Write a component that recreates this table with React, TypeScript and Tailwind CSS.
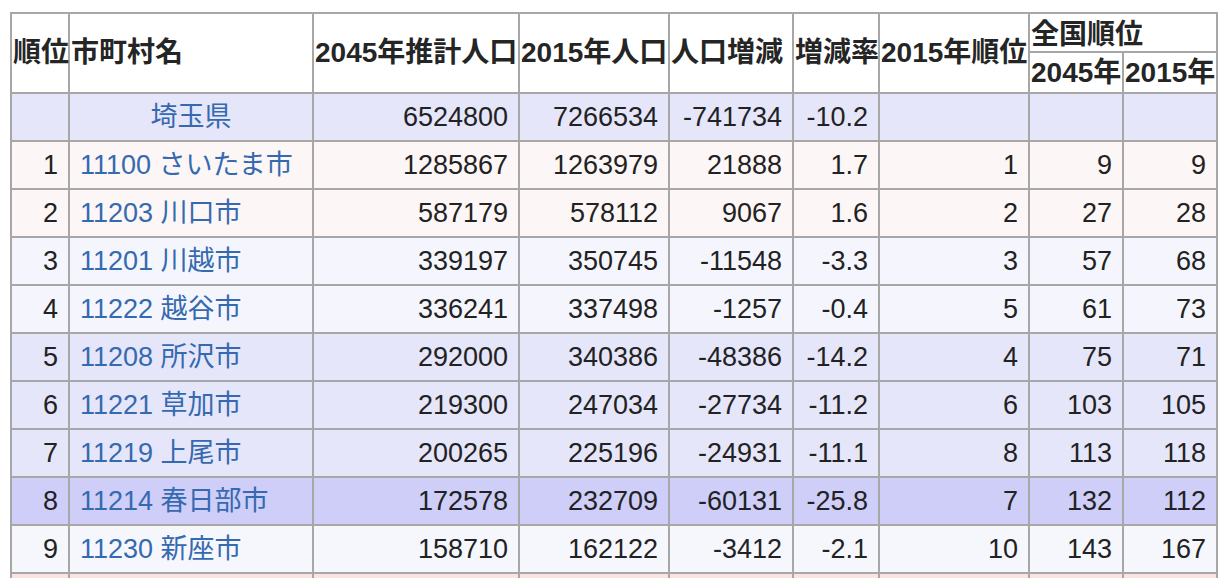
import React from "react";

type Row = {
  rank: string;
  name: string;
  p2045: string;
  p2015: string;
  diff: string;
  rate: string;
  r2015: string;
  n2045: string;
  n2015: string;
  bg: string;
};

const rows: Row[] = [
  { rank: "1", name: "11100 さいたま市", p2045: "1285867", p2015: "1263979", diff: "21888", rate: "1.7", r2015: "1", n2045: "9", n2015: "9", bg: "bg-[#fcf6f6]" },
  { rank: "2", name: "11203 川口市", p2045: "587179", p2015: "578112", diff: "9067", rate: "1.6", r2015: "2", n2045: "27", n2015: "28", bg: "bg-[#fcf6f6]" },
  { rank: "3", name: "11201 川越市", p2045: "339197", p2015: "350745", diff: "-11548", rate: "-3.3", r2015: "3", n2045: "57", n2015: "68", bg: "bg-[#f5f6fd]" },
  { rank: "4", name: "11222 越谷市", p2045: "336241", p2015: "337498", diff: "-1257", rate: "-0.4", r2015: "5", n2045: "61", n2015: "73", bg: "bg-[#f5f6fd]" },
  { rank: "5", name: "11208 所沢市", p2045: "292000", p2015: "340386", diff: "-48386", rate: "-14.2", r2015: "4", n2045: "75", n2015: "71", bg: "bg-[#e6e6fa]" },
  { rank: "6", name: "11221 草加市", p2045: "219300", p2015: "247034", diff: "-27734", rate: "-11.2", r2015: "6", n2045: "103", n2015: "105", bg: "bg-[#e6e6fa]" },
  { rank: "7", name: "11219 上尾市", p2045: "200265", p2015: "225196", diff: "-24931", rate: "-11.1", r2015: "8", n2045: "113", n2015: "118", bg: "bg-[#e6e6fa]" },
  { rank: "8", name: "11214 春日部市", p2045: "172578", p2015: "232709", diff: "-60131", rate: "-25.8", r2015: "7", n2045: "132", n2015: "112", bg: "bg-[#cecef9]" },
  { rank: "9", name: "11230 新座市", p2045: "158710", p2015: "162122", diff: "-3412", rate: "-2.1", r2015: "10", n2045: "143", n2015: "167", bg: "bg-[#f6f7fd]" },
  { rank: "", name: "", p2045: "", p2015: "", diff: "", rate: "", r2015: "", n2045: "", n2015: "", bg: "bg-[#fde2e2]" },
];

const headBase =
  "bg-white flex items-center px-[1px] whitespace-nowrap font-bold text-[28px] text-[#252525]";

function Num({ v, bg }: { v: string; bg: string }) {
  return (
    <div className={`${bg} flex items-center justify-end pr-[10px] text-[27px] text-[#222]`}>{v}</div>
  );
}

export default function App() {
  return (
    <div
      className="bg-white min-h-screen pl-[10px] pt-[12px]"
      style={{ fontFamily: '"Liberation Sans", "Noto Sans CJK JP", sans-serif' }}
    >
      <div className="inline-grid w-max bg-[#a7a7a7] gap-[2px] p-[2px] grid-cols-[56px_242px_204px_148px_122px_84px_148px_92px_92px] grid-rows-[37px_39px] auto-rows-[46px]">
        <div className={`${headBase} row-span-2`}>順位</div>
        <div className={`${headBase} row-span-2`}>市町村名</div>
        <div className={`${headBase} row-span-2`}>2045年推計人口</div>
        <div className={`${headBase} row-span-2`}>2015年人口</div>
        <div className={`${headBase} row-span-2`}>人口増減</div>
        <div className={`${headBase} row-span-2`}>増減率</div>
        <div className={`${headBase} row-span-2`}>2015年順位</div>
        <div className={`${headBase} col-span-2 pt-[4px]`}>全国順位</div>
        <div className={headBase}>2045年</div>
        <div className={headBase}>2015年</div>

        <div className="bg-[#e6e6fa]" />
        <div className="bg-[#e6e6fa] flex items-center justify-center text-[27px] text-[#3569b0]">埼玉県</div>
        <Num v="6524800" bg="bg-[#e6e6fa]" />
        <Num v="7266534" bg="bg-[#e6e6fa]" />
        <Num v="-741734" bg="bg-[#e6e6fa]" />
        <Num v="-10.2" bg="bg-[#e6e6fa]" />
        <div className="bg-[#e6e6fa]" />
        <div className="bg-[#e6e6fa]" />
        <div className="bg-[#e6e6fa]" />

        {rows.map((r, i) => (
          <React.Fragment key={i}>
            <Num v={r.rank} bg={r.bg} />
            <div className={`${r.bg} flex items-center pl-[10px] text-[27px] text-[#3569b0] whitespace-nowrap`}>
              {r.name}
            </div>
            <Num v={r.p2045} bg={r.bg} />
            <Num v={r.p2015} bg={r.bg} />
            <Num v={r.diff} bg={r.bg} />
            <Num v={r.rate} bg={r.bg} />
            <Num v={r.r2015} bg={r.bg} />
            <Num v={r.n2045} bg={r.bg} />
            <Num v={r.n2015} bg={r.bg} />
          </React.Fragment>
        ))}
      </div>
    </div>
  );
}
